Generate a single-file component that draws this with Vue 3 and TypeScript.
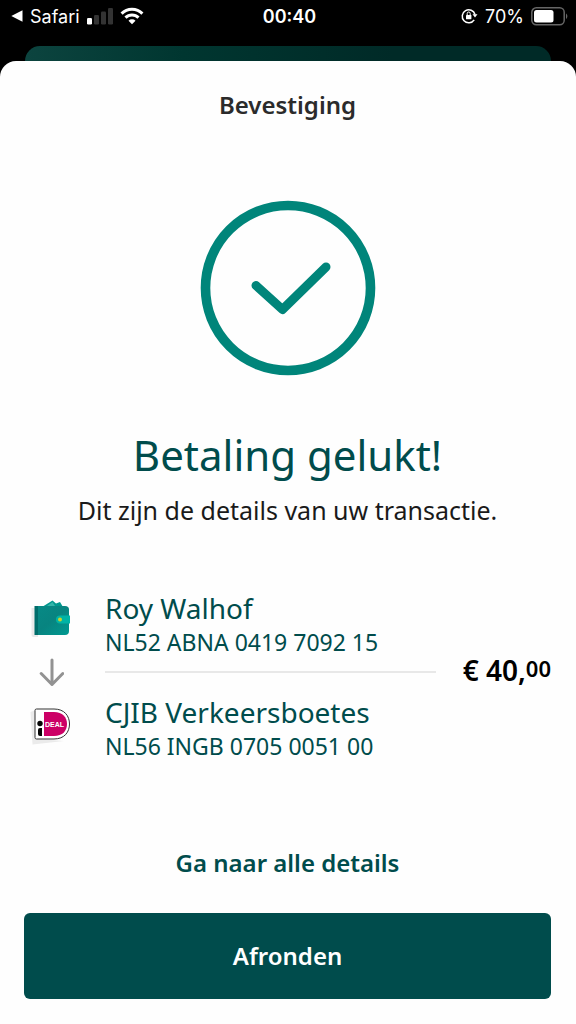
<script setup lang="ts">
interface Party {
  name: string
  iban: string
}

const sender: Party = { name: 'Roy Walhof', iban: 'NL52 ABNA 0419 7092 15' }
const receiver: Party = { name: 'CJIB Verkeersboetes', iban: 'NL56 INGB 0705 0051 00' }
const amount = { whole: '€ 40,', cents: '00' }
</script>

<template>
  <div class="screen">
    <header class="status">
      <div class="status-left">
        <a class="back" href="#">
          <svg width="12" height="12" viewBox="0 0 12 12" aria-hidden="true">
            <path d="M11.5 0.3V11.7L0.3 6Z" fill="#fff" />
          </svg>
          <span>Safari</span>
        </a>
        <svg width="26" height="17" viewBox="0 0 26 17" aria-hidden="true">
          <rect x="0" y="10" width="5" height="6.5" rx="1.2" fill="#fff" />
          <rect x="7" y="7" width="5" height="9.5" rx="1.2" fill="#333" />
          <rect x="14" y="3.5" width="5" height="13" rx="1.2" fill="#333" />
          <rect x="21" y="0" width="5" height="16.5" rx="1.2" fill="#333" />
        </svg>
        <svg width="24" height="18" viewBox="0 0 24 18" fill="none" stroke="#fff" stroke-width="3" aria-hidden="true">
          <path d="M1.6 6.6A14.6 14.6 0 0 1 22.4 6.6" />
          <path d="M5.5 10.6A9.2 9.2 0 0 1 18.5 10.6" />
          <path d="M8.5 13.7A5 5 0 0 1 15.5 13.7L12 17.2Z" fill="#fff" stroke="none" />
        </svg>
      </div>
      <time class="clock">00:40</time>
      <div class="status-right">
        <svg width="17" height="16" viewBox="0 0 17 16" fill="none" aria-hidden="true">
          <path d="M13.2 11.8A6.5 6.5 0 1 1 14 6.5" stroke="#fff" stroke-width="1.5" />
          <path d="M11.5 6.3H16.5L14 9.6Z" fill="#fff" />
          <rect x="5" y="7" width="5.4" height="4.3" rx="0.6" fill="#fff" />
          <path d="M6.2 7V5.5A1.5 1.5 0 0 1 9.2 5.5V7" stroke="#fff" stroke-width="1" />
        </svg>
        <span>70%</span>
        <svg width="37" height="19" viewBox="0 0 37 19" fill="none" aria-hidden="true">
          <rect x="0.8" y="0.8" width="32.4" height="17" rx="4.5" stroke="#666" stroke-width="1.5" />
          <rect x="3" y="3" width="19.5" height="12.6" rx="2.5" fill="#fff" />
          <path d="M35 6.5C36.8 7.5 36.8 11 35 12Z" fill="#666" />
        </svg>
      </div>
    </header>

    <div class="behind"></div>

    <main class="sheet">
      <h1 class="title">Bevestiging</h1>

      <svg class="success" width="176" height="176" viewBox="0 0 176 176" fill="none" stroke="#00857a" aria-hidden="true">
        <circle cx="88" cy="88" r="82.5" stroke-width="9.6" />
        <path d="M56 85.5L82.5 109.5L126 67" stroke-width="9" stroke-linecap="round" stroke-linejoin="round" />
      </svg>

      <h2 class="headline">Betaling gelukt!</h2>
      <p class="intro">Dit zijn de details van uw transactie.</p>

      <section class="transfer">
        <div class="icons">
          <svg width="42" height="42" viewBox="0 0 42 42" aria-hidden="true">
            <defs>
              <linearGradient id="leather" x1="0" y1="0" x2="1" y2="1">
                <stop offset="0" stop-color="#078a86" />
                <stop offset="0.5" stop-color="#088480" />
                <stop offset="1" stop-color="#009a91" />
              </linearGradient>
            </defs>
            <path d="M1.5 9H8V38H3.5Q1.5 38 1.5 36Z" fill="#eaeaea" />
            <path d="M12 8L22.5 1.5L26 4.5L30 3L33 8Z" fill="#00988e" />
            <path d="M17 7L22.5 3L25 7Z" fill="#33b5aa" />
            <path d="M5 7H35Q39 7 39 10.5V32Q39 36 35 36H5Z" fill="url(#leather)" />
            <path d="M4.5 7H8V36H4.5Z" fill="#006d6b" />
            <path d="M30 16.5H40V24.5H30A4 4 0 0 1 30 16.5Z" fill="#00b3a5" />
            <circle cx="30" cy="20.5" r="2" fill="#c8d42b" />
          </svg>
          <svg width="26" height="29" viewBox="0 0 26 29" fill="none" stroke="#929292" stroke-width="3" stroke-linecap="round" stroke-linejoin="round" aria-hidden="true">
            <path d="M14 2V26.5M3.2 15.5L14 26.5L24.8 15.5" />
          </svg>
          <svg width="42" height="42" viewBox="0 0 42 42" aria-hidden="true">
            <path d="M0.5 8L6 6L7 35L34 37L2.5 40.5Z" fill="#ebebeb" />
            <path d="M6.5 5H24C34.5 5 39.5 12 39.5 20C39.5 28 34.5 35 24 35H6.5Q5 35 5 33.5V6.5Q5 5 6.5 5Z" fill="#fff" stroke="#333" stroke-width="1" />
            <path d="M14 8H24C32.5 8 37 13 37 20C37 27 32.5 32 24 32H14Z" fill="#cc0066" />
            <circle cx="10" cy="19.5" r="2.7" fill="#050505" />
            <path d="M8 26Q8 24 10 24H12V32H10Q8 32 8 30Z" fill="#050505" />
            <text x="15" y="22.5" font-family="'Liberation Sans', Arial, sans-serif" font-size="7" font-weight="700" fill="#fff">DEAL</text>
          </svg>
        </div>
        <div class="parties">
          <div>
            <p class="name">{{ sender.name }}</p>
            <p class="iban">{{ sender.iban }}</p>
          </div>
          <hr class="divider" />
          <div>
            <p class="name">{{ receiver.name }}</p>
            <p class="iban">{{ receiver.iban }}</p>
          </div>
        </div>
        <p class="amount">{{ amount.whole }}<span class="cents">{{ amount.cents }}</span></p>
      </section>

      <footer class="actions">
        <a class="details" href="#">Ga naar alle details</a>
        <button class="finish" type="button">Afronden</button>
      </footer>
    </main>
  </div>
</template>

<style>
body {
  margin: 0;
  background: #000;
}
</style>

<style scoped>
.screen {
  display: flex;
  flex-direction: column;
  min-height: 100vh;
  background: #000;
  font-family: 'Noto Sans', 'Open Sans', sans-serif;
}

h1,
h2,
p {
  margin: 0;
  font-weight: 400;
}

.status {
  display: grid;
  grid-template-columns: 1fr auto 1fr;
  align-items: center;
  height: 32px;
  margin-bottom: 14px;
  padding: 0 8px 0 11px;
  color: #fff;
  font-family: Inter, Roboto, sans-serif;
  font-size: 18px;
}

.status-left,
.status-right,
.back {
  display: flex;
  align-items: center;
}

.status-left {
  gap: 7px;
}

.back {
  gap: 7px;
  color: #fff;
  text-decoration: none;
}

.clock {
  font-weight: 600;
}

.status-right {
  justify-content: flex-end;
  gap: 7px;
}

.behind {
  height: 15px;
  margin: 0 25px;
  border-radius: 15px 15px 0 0;
  background: linear-gradient(90deg, #0c443f, #003630 30%, #002a27 70%, #002a27);
}

.sheet {
  display: flex;
  flex: 1;
  flex-direction: column;
  align-items: center;
  padding: 0 25px 25px 24px;
  border-radius: 16px 16px 0 0;
  background: #fefefe;
}

.title {
  margin-top: 28px;
  color: #2b2b2b;
  font-size: 24px;
  font-weight: 600;
  line-height: 32px;
}

.success {
  margin-top: 79px;
}

.headline {
  margin-top: 49px;
  color: #004c4c;
  font-size: 42px;
  line-height: 60px;
}

.intro {
  margin-top: 9px;
  color: #1a1a1a;
  font-size: 25px;
  line-height: 32px;
}

.transfer {
  display: grid;
  grid-template-columns: 54px 1fr auto;
  column-gap: 27px;
  align-items: start;
  align-self: stretch;
  margin-top: 64px;
}

.icons {
  display: flex;
  flex-direction: column;
  align-items: center;
  gap: 17px;
  padding-top: 9px;
}

.parties {
  color: #004c4c;
}

.name {
  font-size: 28px;
  line-height: 36px;
}

.iban {
  font-size: 23px;
  line-height: 32px;
}

.divider {
  height: 2px;
  margin: 13px 0 21px;
  border: 0;
  background: #e8e8e8;
}

.amount {
  display: flex;
  padding-top: 64px;
  color: #000;
  font-size: 28px;
  font-weight: 600;
  line-height: 32px;
}

.cents {
  font-size: 22px;
  line-height: 28px;
}

.actions {
  display: flex;
  flex-direction: column;
  align-items: center;
  align-self: stretch;
  gap: 34px;
  margin-top: auto;
}

.details {
  color: #004c4c;
  font-size: 24px;
  font-weight: 600;
  line-height: 32px;
  text-decoration: none;
}

.finish {
  width: 100%;
  height: 86px;
  padding: 0 0 2px;
  border: 0;
  border-radius: 6px;
  background: #004c4c;
  color: #fff;
  font: inherit;
  font-size: 24px;
  font-weight: 600;
}
</style>
